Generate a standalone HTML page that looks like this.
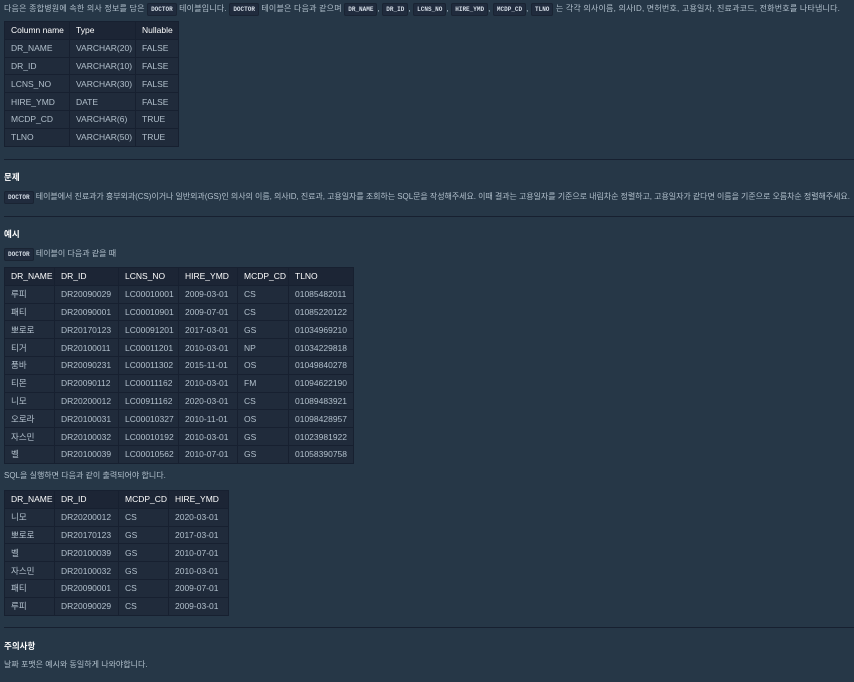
<!DOCTYPE html>
<html><head><meta charset="utf-8"><style>
*{margin:0;padding:0;box-sizing:border-box}
body{width:854px;height:682px;background:#263747;color:#b2c0cc;font-family:"Liberation Sans","Noto Sans CJK KR",sans-serif;font-size:8.5px;position:relative;overflow:hidden}
.a{position:absolute;white-space:nowrap;font-size:8px;letter-spacing:0}
code{font-family:"Liberation Mono",monospace;font-size:6px;font-weight:bold;background:#202b3d;color:#d5dde6;padding:2px 3px;border-radius:2px;border:1px solid #1a2433;letter-spacing:0}
table{position:absolute;border-collapse:collapse;background:#202b3b;table-layout:fixed}
td,th{border:1px solid #172030;height:17.8px;padding:0 6px;text-align:left;font-weight:normal;white-space:nowrap;overflow:hidden}
th{color:#fff;background:#1c2535}
hr{position:absolute;left:4px;right:0;border:0;border-top:1px solid #172030;height:0}
h4{position:absolute;color:#fff;font-size:8.5px;font-weight:bold;left:4px}
</style></head><body>
<div class="a" style="left:4px;top:3px;letter-spacing:0.2px">다음은 종합병원에 속한 의사 정보를 담은 <code>DOCTOR</code> 테이블입니다. <code>DOCTOR</code> 테이블은 다음과 같으며 <code>DR_NAME</code>, <code>DR_ID</code>, <code>LCNS_NO</code>, <code>HIRE_YMD</code>, <code>MCDP_CD</code>, <code>TLNO</code> 는 각각 의사이름, 의사ID, 면허번호, 고용일자, 진료과코드, 전화번호를 나타냅니다.</div>
<table style="left:4px;top:21px;width:174px">
<colgroup><col style="width:65px"><col style="width:66px"><col style="width:43px"></colgroup>
<tr><th>Column name</th><th>Type</th><th>Nullable</th></tr>
<tr><td>DR_NAME</td><td>VARCHAR(20)</td><td>FALSE</td></tr>
<tr><td>DR_ID</td><td>VARCHAR(10)</td><td>FALSE</td></tr>
<tr><td>LCNS_NO</td><td>VARCHAR(30)</td><td>FALSE</td></tr>
<tr><td>HIRE_YMD</td><td>DATE</td><td>FALSE</td></tr>
<tr><td>MCDP_CD</td><td>VARCHAR(6)</td><td>TRUE</td></tr>
<tr><td>TLNO</td><td>VARCHAR(50)</td><td>TRUE</td></tr>
</table>
<hr style="top:159px">
<h4 style="top:171px">문제</h4>
<div class="a" style="left:4px;top:191px;letter-spacing:-0.05px"><code>DOCTOR</code> 테이블에서 진료과가 흉부외과(CS)이거나 일반외과(GS)인 의사의 이름, 의사ID, 진료과, 고용일자를 조회하는 SQL문을 작성해주세요. 이때 결과는 고용일자를 기준으로 내림차순 정렬하고, 고용일자가 같다면 이름을 기준으로 오름차순 정렬해주세요.</div>
<hr style="top:216px">
<h4 style="top:228px">예시</h4>
<div class="a" style="left:4px;top:248px"><code>DOCTOR</code> 테이블이 다음과 같을 때</div>
<table style="left:4px;top:267px;width:349px">
<colgroup><col style="width:50px"><col style="width:64px"><col style="width:60px"><col style="width:59px"><col style="width:51px"><col style="width:65px"></colgroup>
<tr><th>DR_NAME</th><th>DR_ID</th><th>LCNS_NO</th><th>HIRE_YMD</th><th>MCDP_CD</th><th>TLNO</th></tr>
<tr><td>루피</td><td>DR20090029</td><td>LC00010001</td><td>2009-03-01</td><td>CS</td><td>01085482011</td></tr>
<tr><td>패티</td><td>DR20090001</td><td>LC00010901</td><td>2009-07-01</td><td>CS</td><td>01085220122</td></tr>
<tr><td>뽀로로</td><td>DR20170123</td><td>LC00091201</td><td>2017-03-01</td><td>GS</td><td>01034969210</td></tr>
<tr><td>티거</td><td>DR20100011</td><td>LC00011201</td><td>2010-03-01</td><td>NP</td><td>01034229818</td></tr>
<tr><td>품바</td><td>DR20090231</td><td>LC00011302</td><td>2015-11-01</td><td>OS</td><td>01049840278</td></tr>
<tr><td>티몬</td><td>DR20090112</td><td>LC00011162</td><td>2010-03-01</td><td>FM</td><td>01094622190</td></tr>
<tr><td>니모</td><td>DR20200012</td><td>LC00911162</td><td>2020-03-01</td><td>CS</td><td>01089483921</td></tr>
<tr><td>오로라</td><td>DR20100031</td><td>LC00010327</td><td>2010-11-01</td><td>OS</td><td>01098428957</td></tr>
<tr><td>자스민</td><td>DR20100032</td><td>LC00010192</td><td>2010-03-01</td><td>GS</td><td>01023981922</td></tr>
<tr><td>벨</td><td>DR20100039</td><td>LC00010562</td><td>2010-07-01</td><td>GS</td><td>01058390758</td></tr>
</table>
<div class="a" style="left:4px;top:470px">SQL을 실행하면 다음과 같이 출력되어야 합니다.</div>
<table style="left:4px;top:490px;width:224px">
<colgroup><col style="width:50px"><col style="width:64px"><col style="width:50px"><col style="width:60px"></colgroup>
<tr><th>DR_NAME</th><th>DR_ID</th><th>MCDP_CD</th><th>HIRE_YMD</th></tr>
<tr><td>니모</td><td>DR20200012</td><td>CS</td><td>2020-03-01</td></tr>
<tr><td>뽀로로</td><td>DR20170123</td><td>GS</td><td>2017-03-01</td></tr>
<tr><td>벨</td><td>DR20100039</td><td>GS</td><td>2010-07-01</td></tr>
<tr><td>자스민</td><td>DR20100032</td><td>GS</td><td>2010-03-01</td></tr>
<tr><td>패티</td><td>DR20090001</td><td>CS</td><td>2009-07-01</td></tr>
<tr><td>루피</td><td>DR20090029</td><td>CS</td><td>2009-03-01</td></tr>
</table>
<hr style="top:627px">
<h4 style="top:640px">주의사항</h4>
<div class="a" style="left:4px;top:659px">날짜 포맷은 예시와 동일하게 나와야합니다.</div>
</body></html>
